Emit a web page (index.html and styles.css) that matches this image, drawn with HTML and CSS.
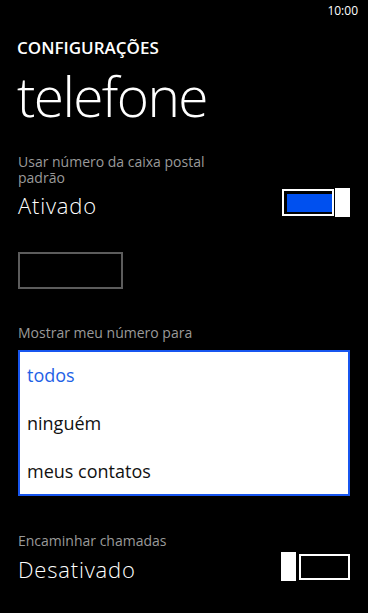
FILE: index.html
```html
<!DOCTYPE html>
<html lang="pt">
<head>
<meta charset="utf-8">
<link rel="stylesheet" href="styles.css">
</head>
<body>
<div class="status"><span class="time">10:00</span></div>
<header class="header">
  <div class="app-title">CONFIGURAÇÕES</div>
  <h1 class="page-title">telefone</h1>
</header>
<main class="content">
  <section class="setting voicemail">
    <div class="label">Usar número da caixa postal<br>padrão</div>
    <div class="toggle-row">
      <span class="value">Ativado</span>
      <span class="switch on"><span class="track"><span class="fill"></span></span><span class="thumb"></span></span>
    </div>
  </section>
  <div class="textbox"></div>
  <section class="setting list-setting">
    <div class="label">Mostrar meu número para</div>
    <ul class="listbox">
      <li class="item selected">todos</li>
      <li class="item">ninguém</li>
      <li class="item">meus contatos</li>
    </ul>
  </section>
  <section class="setting forward">
    <div class="label">Encaminhar chamadas</div>
    <div class="toggle-row">
      <span class="value">Desativado</span>
      <span class="switch off"><span class="thumb"></span><span class="track"></span></span>
    </div>
  </section>
</main>
</body>
</html>
```
FILE: styles.css
```css
html, body {
  margin: 0;
  padding: 0;
  background: #000;
  color: #fff;
  font-family: "Open Sans", "Noto Sans", sans-serif;
  width: 368px;
  height: 613px;
  overflow: hidden;
}
.status {
  display: flex;
  justify-content: flex-end;
  height: 24px;
  padding: 3px 10px 0 0;
  box-sizing: border-box;
}
.time {
  font-size: 12px;
  line-height: 16px;
}
.header {
  padding-left: 17px;
}
.app-title {
  margin-top: 14px;
  font-size: 17px;
  font-weight: 600;
  line-height: 20px;
}
.page-title {
  margin: 7px 0 0 0;
  font-size: 55px;
  font-weight: 300;
  line-height: 62px;
  letter-spacing: -1.6px;
}
.content {
  padding: 0 18px 0 18px;
}
.label {
  color: #9a9a9a;
  font-size: 14px;
  line-height: 16px;
}
.voicemail {
  margin-top: 27px;
}
.toggle-row {
  display: flex;
  justify-content: space-between;
  align-items: flex-start;
  margin-top: 2px;
}
.value {
  font-size: 22px;
  font-weight: 300;
  line-height: 34px;
  letter-spacing: 0.8px;
}
.switch {
  display: flex;
  align-items: center;
  height: 29px;
}
.switch .thumb {
  width: 15px;
  height: 29px;
  background: #fff;
}
.switch .track {
  box-sizing: border-box;
  border: 2px solid #fff;
  display: flex;
}
.switch.on .track {
  width: 52px;
  height: 27px;
  margin-right: 1px;
  padding: 3px 0 2px 3px;
}
.switch.on .fill {
  flex: 1;
  background: #0050ef;
}
.switch.off .track {
  width: 51px;
  height: 26px;
  margin-left: 3px;
}
.forward .toggle-row {
  margin-top: 3px;
}
.textbox {
  margin-top: 30px;
  width: 105px;
  height: 37px;
  box-sizing: border-box;
  border: 2px solid #5c5c5c;
}
.list-setting {
  margin-top: 36px;
}
.listbox {
  list-style: none;
  margin: 9px 0 0 0;
  padding: 0;
  background: #fff;
  border: 2px solid #1856ef;
  height: 146px;
  box-sizing: border-box;
}
.item {
  color: #111;
  font-size: 18px;
  line-height: 48px;
  height: 48px;
  padding-left: 7px;
  margin-top: -1px;
  margin-bottom: 1px;
}
.item.selected {
  color: #1e62e6;
}
.forward {
  margin-top: 37px;
}
```
